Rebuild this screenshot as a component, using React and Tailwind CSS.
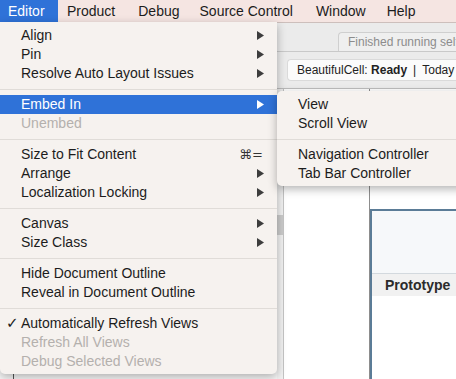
import React from "react";

const menuItems = [
  { t: "Align", arrow: true },
  { t: "Pin", arrow: true },
  { t: "Resolve Auto Layout Issues", arrow: true },
  "sep",
  { t: "Embed In", arrow: true, active: true },
  { t: "Unembed", disabled: true },
  "sep",
  { t: "Size to Fit Content", key: "⌘=" },
  { t: "Arrange", arrow: true },
  { t: "Localization Locking", arrow: true },
  "sep",
  { t: "Canvas", arrow: true },
  { t: "Size Class", arrow: true },
  "sep",
  { t: "Hide Document Outline" },
  { t: "Reveal in Document Outline" },
  "sep",
  { t: "Automatically Refresh Views", check: true },
  { t: "Refresh All Views", disabled: true },
  { t: "Debug Selected Views", disabled: true },
];

const subItems = [
  { t: "View" },
  { t: "Scroll View" },
  "sep",
  { t: "Navigation Controller" },
  { t: "Tab Bar Controller" },
];

function Arrow({ white }) {
  return (
    <svg width="7" height="9" viewBox="0 0 7 9">
      <polygon points="0,0 7,4.5 0,9" fill={white ? "#ffffff" : "#3d3d3d"} />
    </svg>
  );
}

function MenuRows({ rows }) {
  return rows.map((it, i) => {
    if (it === "sep") {
      return (
        <div key={i} className="h-[12px] flex items-center">
          <div className="w-full h-px bg-[#e0dcd8]" />
        </div>
      );
    }
    const color = it.active ? "text-white bg-[#2f72d8]" : it.disabled ? "text-[#b4b0ad]" : "text-[#1c1c1c]";
    return (
      <div key={i} className={`relative flex items-center h-[19px] pl-[21px] pr-[13px] ${color}`}>
        {it.check && <span className="absolute left-[6px] text-[15px] font-bold font-['DejaVu_Sans',sans-serif] text-[#1c1c1c]">✓</span>}
        <span className="flex-1 whitespace-nowrap">{it.t}</span>
        {it.arrow && <Arrow white={it.active} />}
        {it.key && <span className="font-['DejaVu_Sans',sans-serif] text-[13px] text-[#333] pr-[1px]">{it.key}</span>}
      </div>
    );
  });
}

export default function App() {
  return (
    <div className="relative w-[456px] h-[379px] overflow-hidden bg-white flex flex-col font-['Liberation_Sans',Arial,sans-serif] text-[14px]">
      {/* menu bar */}
      <div className="flex h-[23px] shrink-0 bg-[#f5e5e2] border-b border-[#cdbfbc] text-[#1c1c1c]">
        <div className="h-[22px] w-[58px] pl-[8px] flex items-center bg-[#2f72d8] text-white">Editor</div>
        <div className="h-[22px] pl-[9px] pr-[14px] flex items-center">Product</div>
        <div className="h-[22px] pl-[9px] pr-[10px] flex items-center">Debug</div>
        <div className="h-[22px] px-[10px] flex items-center">Source Control</div>
        <div className="h-[22px] pl-[13px] pr-[11px] flex items-center">Window</div>
        <div className="h-[22px] px-[10px] flex items-center">Help</div>
      </div>

      {/* window toolbar */}
      <div className="shrink-0 bg-[#ebebeb]">
        <div className="h-[29px] border-b border-[#c9c9c9] flex items-end pl-[338px]">
          <div className="flex-1 min-w-0 overflow-hidden h-[19px] rounded-tl-[4px] border-l border-t border-[#cfcfcf] bg-[#efefef] pl-[9px] flex items-center text-[12px] text-[#8c8c8c] whitespace-nowrap">
            Finished running self
          </div>
        </div>
        <div className="h-[37px] border-b border-[#bdbdbd] flex items-center pl-[287px]">
          <div className="flex-1 h-[22px] rounded-l-[4px] bg-[#fbfbfb] border border-r-0 border-[#dadada] pl-[9px] flex items-center text-[12px] text-[#222] whitespace-nowrap">
            BeautifulCell:&nbsp;<span className="font-bold">Ready</span>
            <span className="px-[6px]">|</span>Today
          </div>
        </div>
      </div>

      {/* content */}
      <div className="flex-1 flex min-h-0">
        <div className="w-[277px] shrink-0 bg-[#f8f8f8] pl-[13px]">
          <div className="w-px h-full bg-[#555]" />
        </div>
        <div className="w-[7px] shrink-0 bg-[#f1f1f1] border-r border-[#c4c4c4] pt-[126px]">
          <div className="h-[20px] w-full bg-[#cbcbcb]" />
        </div>
        <div className="w-[86px] shrink-0 bg-white border-r border-[#8d8d8d]" />
        <div className="flex-1 bg-white pt-[120px]">
          <div className="h-full border-l-2 border-t-2 border-[#5b7c97] flex flex-col">
            <div className="h-[63px] bg-[#f6f8fa] border-b border-[#d3d9de]" />
            <div className="h-[22px] bg-[#f1f1f1] pl-[13px] flex items-center font-bold text-[#2b2b2b]">Prototype</div>
            <div className="flex-1 bg-white" />
          </div>
        </div>
      </div>

      {/* Editor menu */}
      <div className="absolute left-0 top-[22px] w-[277px] pt-[4px] pb-[3px] bg-[#f6f2ef] rounded-b-[5px] shadow-[0_3px_10px_rgba(0,0,0,0.3)]">
        <MenuRows rows={menuItems} />
      </div>

      {/* Embed In submenu */}
      <div className="absolute left-[277px] top-[91px] w-[200px] pt-[4px] pb-[3px] bg-[#f6f2ef] rounded-[5px] shadow-[0_3px_10px_rgba(0,0,0,0.3)]">
        <MenuRows rows={subItems} />
      </div>
    </div>
  );
}
